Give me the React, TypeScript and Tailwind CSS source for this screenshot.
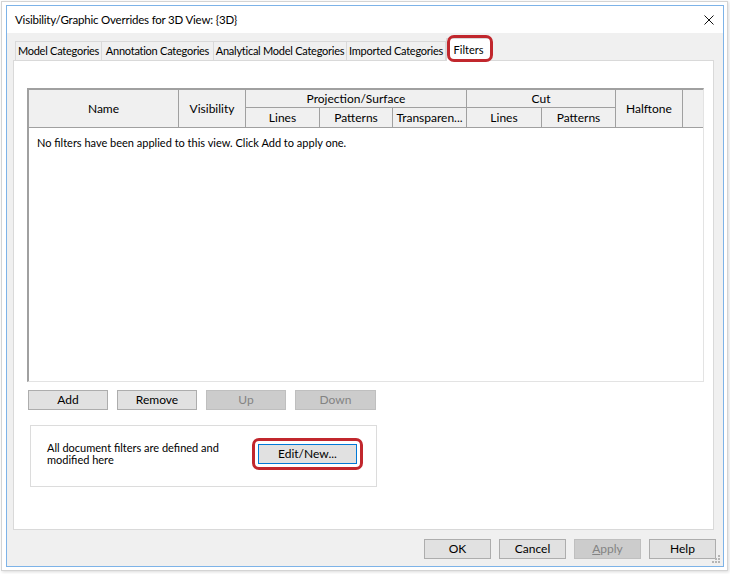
import React from "react";

const font = { fontFamily: '"Segoe UI", Lato, "Noto Sans", sans-serif' };

function Btn({ label, w, disabled, focused }: { label: React.ReactNode; w: string; disabled?: boolean; focused?: boolean }) {
  const base = "h-[20px] flex items-center justify-center text-[12px] leading-none border ";
  const cls = disabled
    ? "bg-[#cccccc] border-[#bfbfbf] text-[#838383]"
    : focused
    ? "bg-[#e1e1e1] border-[#0078d7] text-black"
    : "bg-[#e1e1e1] border-[#adadad] text-black";
  return <div className={base + cls + " " + w}>{label}</div>;
}

const tab = "shrink-0 h-[19px] border border-b-0 border-[#d9d9d9] bg-[#f0f0f0] text-[11px] tracking-[-0.25px] whitespace-nowrap overflow-hidden flex items-center justify-center";

export default function App() {
  return (
    <div className="w-[730px] h-[574px] bg-white overflow-hidden text-black" style={font}>
      <div className="ml-[1px] mt-[1px] w-[727px] h-[570px] border border-[#d4d4d4] pl-[4px] pt-[3px] shadow-[1px_1px_3px_rgba(0,0,0,0.15)]">
        <div className="relative w-[718px] h-[562px] border border-[#7db3e8] bg-[#f0f0f0] flex flex-col">
          {/* title bar */}
          <div className="h-[27px] bg-white flex items-center justify-between pl-[8px] pr-[9px]">
            <span className="text-[11.5px] tracking-[-0.2px]">Visibility/Graphic Overrides for 3D View: {"{3D}"}</span>
            <svg width="10" height="10" viewBox="0 0 10 10">
              <path d="M0.5 0.5 L9.5 9.5 M9.5 0.5 L0.5 9.5" stroke="#111" strokeWidth="1" />
            </svg>
          </div>

          {/* body */}
          <div className="flex-1 flex flex-col pl-[6px] pr-[8px] pt-[5px]">
            {/* tabs */}
            <div className="relative h-[22px] flex items-end pl-[2px] z-10">
              <div className={tab + " w-[87px]"}>Model Categories</div>
              <div className={tab + " w-[112px] border-l-0"}>Annotation Categories</div>
              <div className={tab + " w-[133px] border-l-0"}>Analytical Model Categories</div>
              <div className={tab + " w-[99px] border-l-0"}>Imported Categories</div>
              <div className="shrink-0 h-[23px] -mb-[1px] w-[45px] border border-b-0 border-[#d9d9d9] bg-white text-[11px] flex items-center justify-center">Filters</div>
              <div className="absolute left-[434px] top-[-3px] w-[46px] h-[27px] border-[3px] border-[#c1272d] rounded-[7px]"></div>
            </div>

            {/* panel */}
            <div className="w-[701px] h-[470px] border border-[#d9d9d9] bg-white pl-[13px] pt-[27px]">
              {/* table */}
              <div className="w-[677px] h-[294px] border-t-2 border-l-2 border-[#a0a0a0] border-r border-b border-r-[#e3e3e3] border-b-[#e3e3e3] bg-white">
                <div className="grid grid-cols-[150px_67px_74px_73px_74px_75px_74px_67px_1fr] grid-rows-[18px_19px] bg-[#f0f0f0] border-b border-[#a0a0a0] text-[12px]">
                  <div className="row-span-2 border-r border-[#a0a0a0] flex items-center justify-center">Name</div>
                  <div className="row-span-2 border-r border-[#a0a0a0] flex items-center justify-center">Visibility</div>
                  <div className="col-span-3 border-r border-b border-[#a0a0a0] flex items-center justify-center">Projection/Surface</div>
                  <div className="col-span-2 border-r border-b border-[#a0a0a0] flex items-center justify-center">Cut</div>
                  <div className="row-span-2 border-r border-[#a0a0a0] flex items-center justify-center">Halftone</div>
                  <div className="row-span-2"></div>
                  <div className="border-r border-[#a0a0a0] flex items-center justify-center">Lines</div>
                  <div className="border-r border-[#a0a0a0] flex items-center justify-center">Patterns</div>
                  <div className="border-r border-[#a0a0a0] flex items-center justify-center">Transparen...</div>
                  <div className="border-r border-[#a0a0a0] flex items-center justify-center">Lines</div>
                  <div className="border-r border-[#a0a0a0] flex items-center justify-center">Patterns</div>
                </div>
                <div className="pl-[8px] pt-[7px] text-[11px]">No filters have been applied to this view. Click Add to apply one.</div>
              </div>

              {/* buttons */}
              <div className="flex gap-[9px] ml-[1px] mt-[8px]">
                <Btn label="Add" w="w-[80px]" />
                <Btn label="Remove" w="w-[80px]" />
                <Btn label="Up" w="w-[80px]" disabled />
                <Btn label="Down" w="w-[81px]" disabled />
              </div>

              {/* box */}
              <div className="ml-[3px] mt-[15px] w-[347px] h-[62px] border border-[#dcdcdc] bg-white flex items-center pl-[16px] pb-[5px]">
                <div className="w-[205px] text-[11px] leading-[12px]">
                  All document filters are defined and
                  <br />
                  modified here
                </div>
                <div className="border-[3px] border-[#c1272d] rounded-[7px] p-[3px]">
                  <Btn label="Edit/New..." w="w-[99px]" focused />
                </div>
              </div>
            </div>

            {/* bottom buttons */}
            <div className="flex justify-end gap-[8px] mt-[9px] -mr-[1px]">
              <Btn label="OK" w="w-[67px]" />
              <Btn label="Cancel" w="w-[67px]" />
              <Btn label={<span><span className="underline">A</span>pply</span>} w="w-[67px]" disabled />
              <Btn label="Help" w="w-[67px]" />
            </div>
          </div>

          {/* resize grip */}
          <svg className="absolute right-[2px] bottom-[2px]" width="10" height="10" viewBox="0 0 10 10">
            <g fill="#b5b5b5">
              <rect x="7" y="1" width="2" height="2" />
              <rect x="4" y="4" width="2" height="2" />
              <rect x="7" y="4" width="2" height="2" />
              <rect x="1" y="7" width="2" height="2" />
              <rect x="4" y="7" width="2" height="2" />
              <rect x="7" y="7" width="2" height="2" />
            </g>
          </svg>
        </div>
      </div>
    </div>
  );
}
